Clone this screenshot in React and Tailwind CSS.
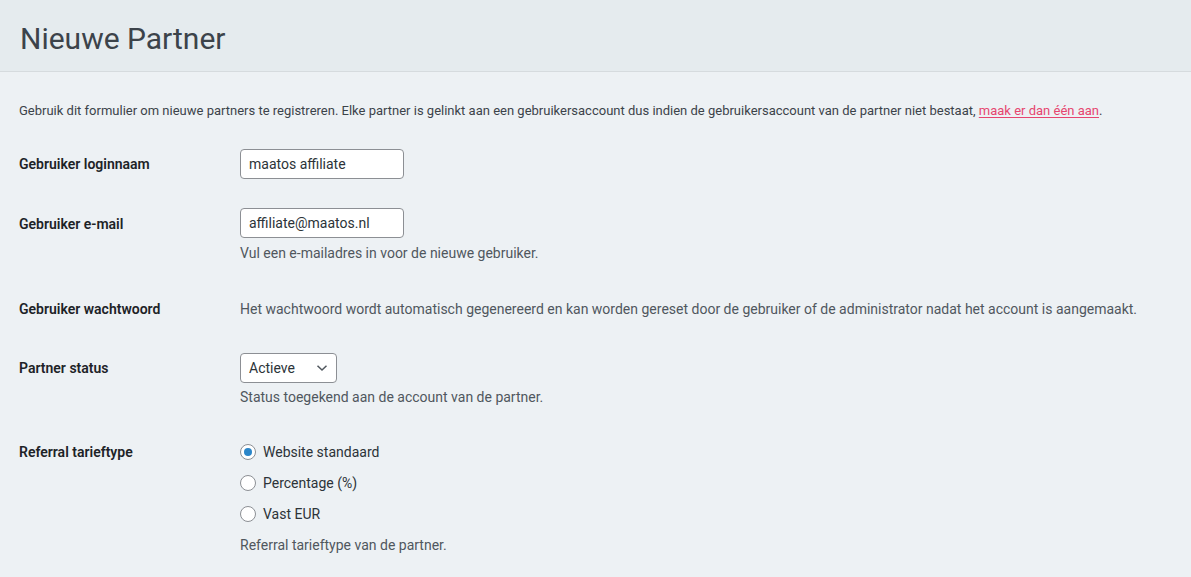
import React, { useState } from "react";

const font = { fontFamily: "Roboto, 'Liberation Sans', sans-serif" };

const Radio = ({ checked, label, onClick }) => (
  <label onClick={onClick} className="flex items-center h-[20px] cursor-pointer">
    <span className="w-[16px] h-[16px] rounded-full border border-[#8c8f94] bg-white flex items-center justify-center">
      {checked && <span className="w-[8px] h-[8px] rounded-full bg-[#2b86c9]"></span>}
    </span>
    <span className="ml-[7px] text-[14px] text-[#2c3338]">{label}</span>
  </label>
);

export default function App() {
  const [rate, setRate] = useState("default");

  return (
    <div style={font} className="min-h-[577px] bg-[#edf1f4] text-[#3c434a]">
      <div className="h-[72px] bg-[#e5ebee] border-b border-[#d6dbde] flex items-center px-[20px]">
        <h1 className="text-[30px] font-normal text-[#3c434a] leading-none pt-[7px]">Nieuwe Partner</h1>
      </div>

      <div className="px-[19px]">
        <p className="mt-[29px] text-[13px] leading-[20px] text-[#3c434a]">
          Gebruik dit formulier om nieuwe partners te registreren. Elke partner is gelinkt aan een gebruikersaccount dus indien de gebruikersaccount van de partner niet bestaat,{" "}
          <a href="#" className="text-[#e6456f] underline underline-offset-2">maak er dan één aan</a>.
        </p>

        <div className="mt-[28px] flex items-start">
          <div className="w-[221px] pt-[5px] text-[14px] leading-[20px] font-semibold text-[#1d2327]">Gebruiker loginnaam</div>
          <input
            defaultValue="maatos affiliate"
            className="w-[164px] h-[30px] px-[8px] text-[14px] text-[#2c3338] bg-white border border-[#8c8f94] rounded-[4px] outline-none"
          />
        </div>

        <div className="mt-[29px] flex items-start">
          <div className="w-[221px] pt-[6px] text-[14px] leading-[20px] font-semibold text-[#1d2327]">Gebruiker e-mail</div>
          <div>
            <input
              defaultValue="affiliate@maatos.nl"
              className="w-[164px] h-[30px] px-[8px] text-[14px] text-[#2c3338] bg-white border border-[#8c8f94] rounded-[4px] outline-none"
            />
            <p className="mt-[5px] text-[14px] leading-[20px] text-[#50575e]">Vul een e-mailadres in voor de nieuwe gebruiker.</p>
          </div>
        </div>

        <div className="mt-[36px] flex items-start">
          <div className="w-[221px] text-[14px] leading-[20px] font-semibold text-[#1d2327]">Gebruiker wachtwoord</div>
          <p className="text-[14px] leading-[20px] text-[#50575e]">
            Het wachtwoord wordt automatisch gegenereerd en kan worden gereset door de gebruiker of de administrator nadat het account is aangemaakt.
          </p>
        </div>

        <div className="mt-[34px] flex items-start">
          <div className="w-[221px] pt-[5px] text-[14px] leading-[20px] font-semibold text-[#1d2327]">Partner status</div>
          <div>
            <div className="w-[97px] h-[30px] pl-[8px] pr-[8px] flex items-center justify-between bg-white border border-[#8c8f94] rounded-[4px] text-[14px] text-[#2c3338]">
              <span>Actieve</span>
              <svg width="12" height="8" viewBox="0 0 12 8" fill="none">
                <path d="M1.5 1.8L6 6L10.5 1.8" stroke="#50575e" strokeWidth="1.5" />
              </svg>
            </div>
            <p className="mt-[4px] text-[14px] leading-[20px] text-[#50575e]">Status toegekend aan de account van de partner.</p>
          </div>
        </div>

        <div className="mt-[35px] flex items-start">
          <div className="w-[221px] text-[14px] leading-[20px] font-semibold text-[#1d2327]">Referral tarieftype</div>
          <div>
            <div className="flex flex-col gap-[11px]">
              <Radio checked={rate === "default"} label="Website standaard" onClick={() => setRate("default")} />
              <Radio checked={rate === "percentage"} label="Percentage (%)" onClick={() => setRate("percentage")} />
              <Radio checked={rate === "flat"} label="Vast EUR" onClick={() => setRate("flat")} />
            </div>
            <p className="mt-[11px] text-[14px] leading-[20px] text-[#50575e]">Referral tarieftype van de partner.</p>
          </div>
        </div>
      </div>
    </div>
  );
}
